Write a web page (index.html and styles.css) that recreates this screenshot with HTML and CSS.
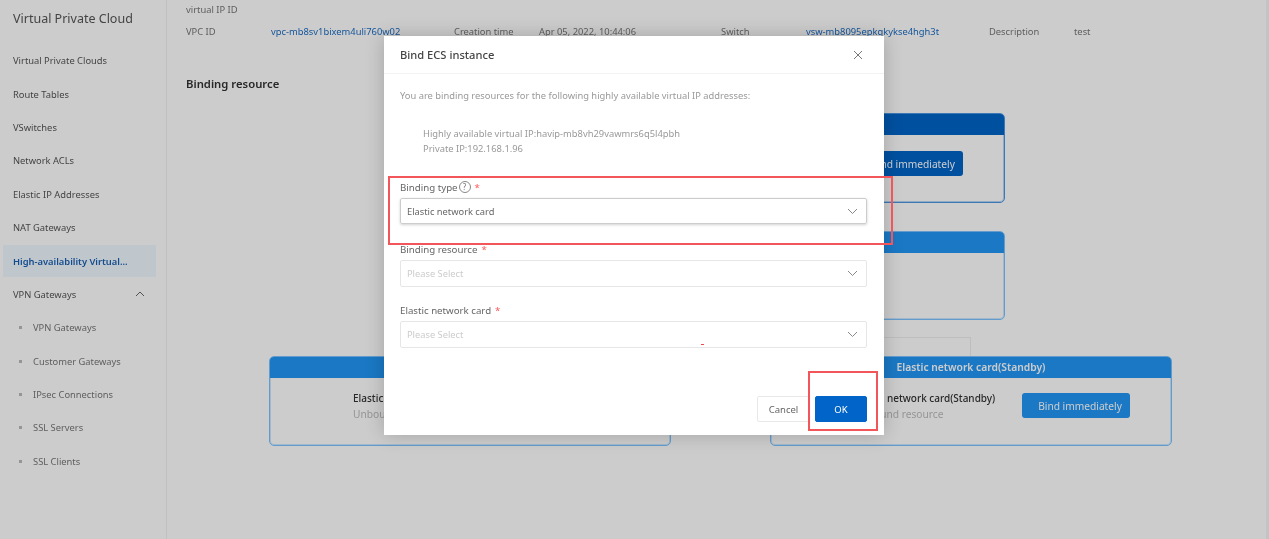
FILE: index.html
```html
<!DOCTYPE html>
<html lang="en">
<head>
<meta charset="utf-8">
<title>Bind ECS instance</title>
<link rel="stylesheet" href="styles.css">
</head>
<body>
<div class="page">
  <aside class="sidebar">
    <div class="side-title">Virtual Private Cloud</div>
    <nav class="side-nav">
      <a class="nav-item">Virtual Private Clouds</a>
      <a class="nav-item">Route Tables</a>
      <a class="nav-item">VSwitches</a>
      <a class="nav-item">Network ACLs</a>
      <a class="nav-item">Elastic IP Addresses</a>
      <a class="nav-item">NAT Gateways</a>
      <a class="nav-item active">High-availability Virtual...</a>
      <a class="nav-item group">VPN Gateways
        <svg class="chev-up" width="10" height="6" viewBox="0 0 10 6"><path d="M1 5 L5 1 L9 5" fill="none" stroke="#666" stroke-width="1"/></svg>
      </a>
      <a class="nav-item sub">VPN Gateways</a>
      <a class="nav-item sub">Customer Gateways</a>
      <a class="nav-item sub">IPsec Connections</a>
      <a class="nav-item sub">SSL Servers</a>
      <a class="nav-item sub">SSL Clients</a>
    </nav>
  </aside>
  <main class="content">
    <div class="info-label first">virtual IP ID</div>
    <div class="info-row">
      <span class="info-label">VPC ID</span><a class="info-link">vpc-mb8sv1bixem4uli760w02</a>
      <span class="info-label">Creation time</span><span class="info-label">Apr 05, 2022, 10:44:06</span>
      <span class="info-label">Switch</span><a class="info-link">vsw-mb8095epkqkykse4hgh3t</a>
      <span class="info-label">Description</span><span class="info-label">test</span>
    </div>
    <h2 class="section-title">Binding resource</h2>
  </main>
  <div class="scrollbar"></div>

  <section class="card card-top">
    <header class="card-head dark"></header>
    <div class="card-body"><button class="bind-btn dark">Bind immediately</button></div>
  </section>
  <section class="card card-mid">
    <header class="card-head"></header>
  </section>
  <div class="ghost-box"></div>
  <section class="card card-left">
    <header class="card-head"></header>
    <div class="card-body">
      <div class="card-text"><strong>Elastic network card</strong><span>Unbound resource</span></div>
    </div>
  </section>
  <section class="card card-right">
    <header class="card-head">Elastic network card(Standby)</header>
    <div class="card-body">
      <div class="card-text"><strong>Elastic network card(Standby)</strong><span>Unbound resource</span></div>
      <button class="bind-btn">Bind immediately</button>
    </div>
  </section>
</div>

<div class="overlay"></div>

<div class="modal">
  <header class="modal-head">
    <span class="modal-title">Bind ECS instance</span>
    <svg class="modal-close" width="10" height="10" viewBox="0 0 10 10"><path d="M1 1 L9 9 M9 1 L1 9" stroke="#777" stroke-width="1" fill="none"/></svg>
  </header>
  <div class="modal-body">
    <p class="intro">You are binding resources for the following highly available virtual IP addresses:</p>
    <div class="vip-info">
      <div>Highly available virtual IP:havip-mb8vh29vawmrs6q5l4pbh</div>
      <div>Private IP:192.168.1.96</div>
    </div>
    <div class="field f1">
      <label class="field-label">Binding type<span class="help">?</span><span class="req">*</span></label>
      <div class="select raised"><span>Elastic network card</span>
        <svg class="chev" width="11" height="7" viewBox="0 0 11 7"><path d="M1 1 L5.5 5.5 L10 1" fill="none" stroke="#888" stroke-width="1"/></svg>
      </div>
    </div>
    <div class="field f2">
      <label class="field-label">Binding resource<span class="req">*</span></label>
      <div class="select empty"><span>Please Select</span>
        <svg class="chev" width="11" height="7" viewBox="0 0 11 7"><path d="M1 1 L5.5 5.5 L10 1" fill="none" stroke="#888" stroke-width="1"/></svg>
      </div>
    </div>
    <div class="field f3">
      <label class="field-label">Elastic network card<span class="req">*</span></label>
      <div class="select empty"><span>Please Select</span>
        <svg class="chev" width="11" height="7" viewBox="0 0 11 7"><path d="M1 1 L5.5 5.5 L10 1" fill="none" stroke="#888" stroke-width="1"/></svg>
      </div>
    </div>
  </div>
  <footer class="modal-foot">
    <button class="btn">Cancel</button>
    <button class="btn primary">OK</button>
  </footer>
</div>

<div class="mark mark-type"></div>
<div class="mark mark-ok"></div>
<div class="red-dot"></div>
</body>
</html>
```
FILE: styles.css
```css
* { box-sizing: border-box; }
html, body { margin: 0; height: 100%; overflow: hidden; }
body {
  width: 1269px;
  height: 539px;
  position: relative;
  font-family: "Noto Sans", "Open Sans", sans-serif;
  font-size: 9.35px;
  color: #444;
  background: #fff;
}
.page { display: flex; width: 100%; height: 539px; position: relative; filter: blur(.45px); }

.sidebar { width: 167px; flex: none; border-right: 1px solid #f2f2f2; padding-left: 3px; padding-right: 10px; }
.side-title { font-size: 12.5px; line-height: 18px; padding: 10px 0 0 10px; color: #555; height: 44px; }
.side-nav { display: flex; flex-direction: column; }
.nav-item { height: 33.4px; display: flex; align-items: center; padding-left: 10px; color: #555; position: relative; }
.nav-item.active { color: #1a5fb4; font-weight: 600; background: #eff9ff; background-clip: padding-box; border-top: 1.5px solid transparent; border-bottom: 1.5px solid transparent; }
.nav-item.group { justify-content: space-between; padding-right: 11px; }
.nav-item.sub { padding-left: 30px; color: #777; }
.nav-item.sub::before { content: ""; position: absolute; left: 16px; top: 15px; width: 3px; height: 3px; background: #bbb; }

.content { flex: 1; padding: 2px 0 0 19px; }
.info-label { color: #777; }
.info-label.first { line-height: 16px; }
.info-row { display: grid; grid-template-columns: 85px 183px 85px 182px 85px 183px 85px auto; line-height: 16px; margin-top: 6px; }
.info-link { color: #1b6cc4; white-space: nowrap; }
.section-title { font-size: 11.3px; font-weight: 600; color: #333; margin: 35px 0 0; line-height: 18px; }
.scrollbar { position: absolute; right: 0; top: 0; bottom: 0; width: 3px; background: #f4f4f4; }

.card { position: absolute; width: 402px; border: 1px solid #7cc4ff; border-radius: 5px; background: #fff; overflow: hidden; box-shadow: inset 0 0 0 1px rgba(124, 196, 255, .4); }
.card-top { left: 603px; top: 113px; height: 90px; border-color: #4c96e4; box-shadow: inset 0 0 0 1px rgba(76, 150, 228, .4); }
.card-top .card-body { padding-top: 2px; }
.card-mid { left: 603px; top: 231px; height: 89px; }
.card-left { left: 269px; top: 356px; height: 90px; }
.card-right { left: 770px; top: 356px; height: 90px; }
.card-head { height: 22px; margin: -1px -1px 0; background: #2196f5; color: #fff; font-weight: 600; font-size: 10.3px; line-height: 23px; text-align: center; }
.card-head.dark { background: #0064c8; }
.card-body { display: flex; align-items: center; height: 67px; padding: 0 41px 12px 83px; justify-content: space-between; }
.card-text { display: flex; flex-direction: column; line-height: 16px; }
.card-text strong { font-weight: 500; color: #333; font-size: 10px; }
.card-text span { color: #bbb; font-size: 10.2px; }
.bind-btn { width: 108px; height: 25px; border: 0; border-radius: 3px; background: #2196f5; color: #fff; font: inherit; font-size: 10.2px; padding: 0 0 0 8px; }
.bind-btn.dark { background: #0064c8; margin-left: auto; }
.ghost-box { position: absolute; left: 880px; top: 337px; width: 91px; height: 30px; border: 1px solid #eee; }

.overlay { position: absolute; inset: 0; background: rgba(0, 0, 0, .2); }

.modal { position: absolute; left: 384px; top: 36px; width: 500px; height: 399px; background: #fff; display: flex; flex-direction: column; box-shadow: 0 0 18px rgba(0,0,0,.2); }
.modal-head { height: 38px; flex: none; display: flex; align-items: center; justify-content: space-between; padding: 0 21px 0 16px; border-bottom: 1px solid #f2f2f2; }
.modal-title { font-size: 11.15px; font-weight: 500; color: #444; filter: blur(.3px); }
.modal-close { filter: blur(.3px); }
.modal-body { flex: 1; padding: 0 17px 0 16px; display: flex; flex-direction: column; filter: blur(.4px); }
.intro { margin: 14px 0 0; color: #999; line-height: 16px; }
.vip-info { margin: 23px 0 0 23px; color: #999; line-height: 14.5px; }
.field { display: flex; flex-direction: column; }
.f1 { margin-top: 23px; }
.f2 { margin-top: 17px; }
.f3 { margin-top: 15px; }
.field-label { display: flex; align-items: center; height: 16px; color: #666; font-size: 9.7px; }
.help { width: 12px; height: 12px; border: 1px solid #888; border-radius: 50%; font-size: 8px; line-height: 10px; text-align: center; margin-left: 1px; color: #777; }
.req { color: #ff5a5a; margin-left: 4px; }
.select { height: 27px; margin-top: 3px; border: 1px solid #e6e6e6; border-radius: 2px; display: flex; align-items: center; justify-content: space-between; padding: 0 8px 0 6px; color: #666; font-size: 9.3px; }
.select.raised { height: 26px; border-color: #ccc; box-shadow: 0 1px 3px rgba(0,0,0,.18); }
.select.empty { color: #ccc; }
.modal-foot { height: 39px; flex: none; display: flex; justify-content: flex-end; gap: 5px; padding: 0 17px 13px; filter: blur(.3px); }
.btn { width: 53px; height: 26px; border: 1px solid #e8e8e8; border-radius: 2px; background: #fff; color: #666; font: inherit; font-size: 9.5px; padding: 0; }
.btn.primary { width: 52px; background: #0064c8; border-color: #0064c8; color: #fff; }

.mark { position: absolute; border: 2px solid #f2555a; filter: blur(.3px); }
.mark-type { left: 388px; top: 176px; width: 505px; height: 69px; }
.mark-ok { left: 808px; top: 371px; width: 70px; height: 60px; }
.red-dot { position: absolute; left: 701px; top: 344px; width: 3px; height: 1px; background: #f0484d; }
```
